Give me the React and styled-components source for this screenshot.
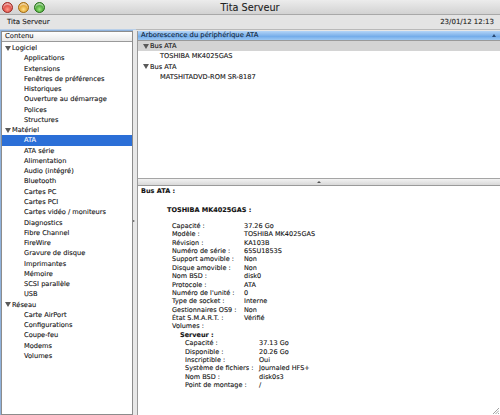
import React from "react";
import styled, { createGlobalStyle } from "styled-components";

const GlobalStyle = createGlobalStyle`
  html, body {
    margin: 0;
    padding: 0;
    background: #e8e8e8;
  }
  body {
    font-family: "DejaVu Sans", Verdana, sans-serif;
    color: #111;
    -webkit-text-stroke: 0.1px currentColor;
  }
`;

const Window = styled.div`
  width: 500px;
  height: 415px;
  display: flex;
  flex-direction: column;
  overflow: hidden;
  background: #e6e6e6;
`;

const TitleBar = styled.div`
  height: 14px;
  display: grid;
  grid-template-columns: 1fr auto 1fr;
  align-items: center;
  background: linear-gradient(#ececec, #d2d2d2);
  border-bottom: 1px solid #a8a8a8;
`;

const Lights = styled.div`
  display: flex;
  gap: 5px;
  padding-left: 2px;
`;

const Light = styled.span`
  width: 11px;
  height: 11px;
  border-radius: 50%;
  box-sizing: border-box;
  border: 1px solid ${(p) => p.$edge};
  background: radial-gradient(circle at 50% 70%, ${(p) => p.$hi} 0%, ${(p) => p.$c} 60%),
    ${(p) => p.$c};
  box-shadow: inset 0 2px 1px rgba(255, 255, 255, 0.55);
`;

const Title = styled.div`
  font-size: 9.7px;
  color: #222;
`;

const Toolbar = styled.div`
  height: 14px;
  display: flex;
  align-items: center;
  justify-content: space-between;
  padding: 0 6px 0 7px;
  font-size: 7px;
  color: #222;
  background: #e4e4e4;
  border-bottom: 1px solid #b9b9b9;
`;

const Body = styled.div`
  flex: 1;
  display: flex;
  min-height: 0;
`;

const Sidebar = styled.div`
  width: 130px;
  display: flex;
  flex-direction: column;
  background: #fff;
  border: 1px solid #8c8c8c;
  box-shadow: 0 0 0 1px #8fb2dc, 1px 0 0 2px #b9cfe8;
  margin: 1px 0 0 1px;
`;

const ColumnHeader = styled.div`
  height: 9px;
  line-height: 9px;
  padding-left: 3px;
  padding-right: 4px;
  font-size: 6.8px;
  display: flex;
  justify-content: space-between;
  align-items: center;
  color: ${(p) => (p.$active ? "#0d1f3a" : "#222")};
  background: ${(p) =>
    p.$active
      ? "linear-gradient(#b3d4f7, #80b4ec 50%, #6aa6e8 51%, #9cc8f3)"
      : "linear-gradient(#ffffff, #e9e9e9)"};
  border-bottom: 1px solid #9a9a9a;
`;

const SortArrow = styled.span`
  width: 0;
  height: 0;
  border-left: 2.5px solid transparent;
  border-right: 2.5px solid transparent;
  border-bottom: 3px solid #2a4a74;
`;

const List = styled.div`
  padding-top: 1px;
`;

const Row = styled.div`
  height: 10.27px;
  line-height: 10.27px;
  display: flex;
  align-items: center;
  font-size: 6.65px;
  white-space: nowrap;
  padding-left: ${(p) => p.$indent}px;
  color: ${(p) => (p.$selected ? "#fff" : "#111")};
  background: ${(p) => (p.$selected ? "#2b6fd7" : p.$dim ? "#d4d4d4" : "transparent")};
`;

const Disclosure = styled.span`
  width: 0;
  height: 0;
  margin-right: 1px;
  border-left: 3px solid transparent;
  border-right: 3px solid transparent;
  border-top: 5px solid #5a5a5a;
`;

const VSplit = styled.div`
  width: 4px;
  position: relative;
  background: #e8e8e8;
`;

const SplitNub = styled.span`
  position: absolute;
  left: 0;
  top: 190px;
  width: 0;
  height: 0;
  border-top: 1.5px solid transparent;
  border-bottom: 1.5px solid transparent;
  border-left: 2px solid #555;
`;

const Main = styled.div`
  flex: 1;
  display: flex;
  flex-direction: column;
  border-left: 1px solid #9a9a9a;
  margin-top: 1px;
`;

const TopPane = styled.div`
  height: 147px;
  background: #fff;
  border-bottom: 1px solid #a5a5a5;
`;

const HSplit = styled.div`
  height: 6px;
  display: flex;
  justify-content: center;
  align-items: center;
  background: linear-gradient(#f2f2f2, #d9d9d9);
  border-bottom: 1px solid #9a9a9a;
`;

const UpNub = styled.span`
  width: 0;
  height: 0;
  border-left: 2px solid transparent;
  border-right: 2px solid transparent;
  border-bottom: 2.5px solid #555;
`;

const BottomPane = styled.div`
  flex: 1;
  position: relative;
  background: #fff;
  padding: 1px 0 0 3px;
  font-size: 6.5px;
`;

const Heading = styled.div`
  font-weight: bold;
  height: 8.4px;
  line-height: 8.4px;
  margin-left: ${(p) => p.$indent || 0}px;
  margin-bottom: ${(p) => p.$gap || 0}px;
`;

const Details = styled.div`
  display: grid;
  grid-template-columns: ${(p) => p.$col}px auto;
  grid-auto-rows: 8.4px;
  line-height: 8.4px;
  margin-left: ${(p) => p.$indent}px;
  white-space: nowrap;
`;

const Grip = styled.svg`
  position: absolute;
  right: 1px;
  bottom: 1px;
`;

const sidebar = [
  { t: "Logiciel", group: true },
  { t: "Applications" },
  { t: "Extensions" },
  { t: "Fenêtres de préférences" },
  { t: "Historiques" },
  { t: "Ouverture au démarrage" },
  { t: "Polices" },
  { t: "Structures" },
  { t: "Matériel", group: true },
  { t: "ATA", selected: true },
  { t: "ATA série" },
  { t: "Alimentation" },
  { t: "Audio (intégré)" },
  { t: "Bluetooth" },
  { t: "Cartes PC" },
  { t: "Cartes PCI" },
  { t: "Cartes vidéo / moniteurs" },
  { t: "Diagnostics" },
  { t: "Fibre Channel" },
  { t: "FireWire" },
  { t: "Gravure de disque" },
  { t: "Imprimantes" },
  { t: "Mémoire" },
  { t: "SCSI parallèle" },
  { t: "USB" },
  { t: "Réseau", group: true },
  { t: "Carte AirPort" },
  { t: "Configurations" },
  { t: "Coupe-feu" },
  { t: "Modems" },
  { t: "Volumes" },
];

const disk = [
  ["Capacité :", "37.26 Go"],
  ["Modèle :", "TOSHIBA MK4025GAS"],
  ["Révision :", "KA103B"],
  ["Numéro de série :", "65SU1853S"],
  ["Support amovible :", "Non"],
  ["Disque amovible :", "Non"],
  ["Nom BSD :", "disk0"],
  ["Protocole :", "ATA"],
  ["Numéro de l'unité :", "0"],
  ["Type de socket :", "Interne"],
  ["Gestionnaires OS9 :", "Non"],
  ["État S.M.A.R.T. :", "Vérifié"],
  ["Volumes :", ""],
];

const volume = [
  ["Capacité :", "37.13 Go"],
  ["Disponible :", "20.26 Go"],
  ["Inscriptible :", "Oui"],
  ["Système de fichiers :", "Journaled HFS+"],
  ["Nom BSD :", "disk0s3"],
  ["Point de montage :", "/"],
];

export default function App() {
  return (
    <Window>
      <GlobalStyle />
      <TitleBar>
        <Lights>
          <Light $c="#d9413a" $hi="#ff9a8a" $edge="#9b2f2a" />
          <Light $c="#dd9a22" $hi="#ffe08a" $edge="#a06c17" />
          <Light $c="#3f9f2c" $hi="#9be87e" $edge="#2c7120" />
        </Lights>
        <Title>Tita Serveur</Title>
        <div />
      </TitleBar>
      <Toolbar>
        <span>Tita Serveur</span>
        <span>23/01/12 12:13</span>
      </Toolbar>
      <Body>
        <Sidebar>
          <ColumnHeader>Contenu</ColumnHeader>
          <List>
            {sidebar.map((r) =>
              r.group ? (
                <Row key={r.t} $indent={3}>
                  <Disclosure />
                  {r.t}
                </Row>
              ) : (
                <Row key={r.t} $indent={22} $selected={r.selected}>
                  {r.t}
                </Row>
              )
            )}
          </List>
        </Sidebar>
        <VSplit>
          <SplitNub />
        </VSplit>
        <Main>
          <TopPane>
            <ColumnHeader $active>
              <span>Arborescence du périphérique ATA</span>
              <SortArrow />
            </ColumnHeader>
            <Row $indent={5} $dim>
              <Disclosure />
              Bus ATA
            </Row>
            <Row $indent={22}>TOSHIBA MK4025GAS</Row>
            <Row $indent={5}>
              <Disclosure />
              Bus ATA
            </Row>
            <Row $indent={22}>MATSHITADVD-ROM SR-8187</Row>
          </TopPane>
          <HSplit>
            <UpNub />
          </HSplit>
          <BottomPane>
            <Heading $gap={11}>Bus ATA :</Heading>
            <Heading $indent={26} $gap={7}>TOSHIBA MK4025GAS :</Heading>
            <Details $indent={31} $col={72}>
              {disk.map(([k, v]) => (
                <React.Fragment key={k}>
                  <span>{k}</span>
                  <span>{v}</span>
                </React.Fragment>
              ))}
            </Details>
            <Heading $indent={39}>Serveur :</Heading>
            <Details $indent={44} $col={74}>
              {volume.map(([k, v]) => (
                <React.Fragment key={k}>
                  <span>{k}</span>
                  <span>{v}</span>
                </React.Fragment>
              ))}
            </Details>
            <Grip width="7" height="7" viewBox="0 0 7 7">
              <path d="M1 7 L7 1 M3.5 7 L7 3.5 M6 7 L7 6" stroke="#8a8a8a" strokeWidth="0.8" />
            </Grip>
          </BottomPane>
        </Main>
      </Body>
    </Window>
  );
}
